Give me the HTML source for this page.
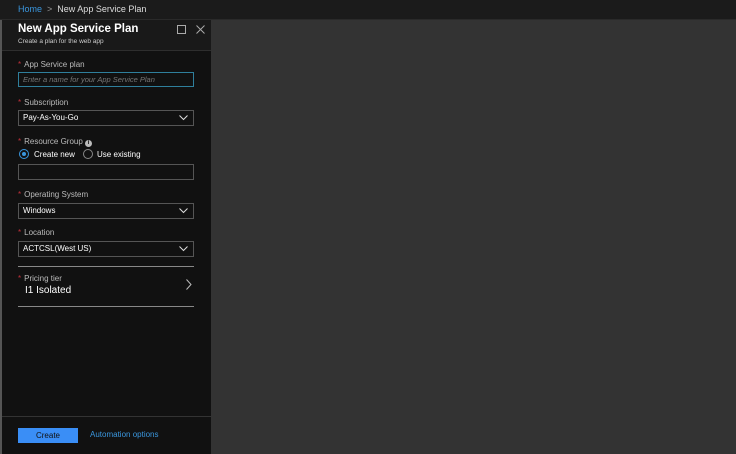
<!DOCTYPE html><html><head><style>
body{margin:0;width:736px;height:454px;background:#333;font-family:"Liberation Sans",sans-serif;position:relative;overflow:hidden}
.top{position:absolute;left:0;top:0;width:736px;height:19px;background:#1b1b1b;border-bottom:1px solid #2a2a2a;font-size:9px;color:#ddd;line-height:19px}
.top span.h{color:#3a96dd;margin-left:18px}
.strip{position:absolute;left:0;top:20px;width:2px;height:434px;background:#555}
.panel{position:absolute;left:2px;top:20px;width:209px;height:434px;background:#111}
.hdr{position:absolute;left:0;top:0;width:209px;height:30px;background:#191919;border-bottom:1px solid #2e2e2e}
.t{position:absolute;left:16px;top:3px;font-size:11.5px;font-weight:bold;color:#fff}
.st{position:absolute;left:16px;top:18px;font-size:6.5px;color:#ccc}
.lbl{position:absolute;left:16px;font-size:8px;color:#bbb}
.lbl b{color:#c0303a;font-weight:normal;margin-right:3px}
.box{position:absolute;left:16px;width:170px;height:14px;border:1px solid #555;font-size:8px;color:#fff;line-height:14px;padding-left:4px}
.chev{position:absolute;right:5px;top:4px}
.line{position:absolute;left:16px;width:176px;height:1px;background:#888}
</style></head><body>
<div class="top"><span class="h">Home</span> <span style="color:#999">&nbsp;&gt;&nbsp;</span> New App Service Plan</div>
<div class="strip"></div>
<div class="panel">
<div class="hdr"><div class="t">New App Service Plan</div><div class="st">Create a plan for the web app</div>
<div style="position:absolute;left:175px;top:5px;width:7px;height:7px;border:1px solid #aaa"></div>
<svg style="position:absolute;left:194px;top:5px" width="9" height="9"><path d="M0.5 0.5L8.5 8.5M8.5 0.5L0.5 8.5" stroke="#aaa" stroke-width="1"/></svg></div>
<div class="lbl" style="top:40px"><b>*</b>App Service plan</div>
<div class="box" style="top:52px;border-color:#2f7f9c;color:#777;font-style:italic;font-size:7.5px;height:13px">Enter a name for your App Service Plan</div>
<div class="lbl" style="top:78px"><b>*</b>Subscription</div>
<div class="box" style="top:90px">Pay-As-You-Go<svg class="chev" width="9" height="6"><path d="M0.5 0.5L4.5 4.5L8.5 0.5" stroke="#ddd" fill="none"/></svg></div>
<div class="lbl" style="top:117px"><b>*</b>Resource Group <span style="display:inline-block;width:7px;height:7px;border-radius:50%;background:#bbb;color:#111;font-size:6px;text-align:center;line-height:7px;font-weight:bold">i</span></div>
<div style="position:absolute;left:17px;top:129px;width:10px;height:10px;border-radius:50%;border:1px solid #3a96dd;box-sizing:border-box"><div style="margin:2px;width:4px;height:4px;border-radius:50%;background:#3a96dd"></div></div>
<div style="position:absolute;left:32px;top:130px;font-size:8px;color:#fff">Create new</div>
<div style="position:absolute;left:81px;top:129px;width:10px;height:10px;border-radius:50%;border:1px solid #888;box-sizing:border-box"></div>
<div style="position:absolute;left:95px;top:130px;font-size:8px;color:#fff">Use existing</div>
<div class="box" style="top:144px"></div>
<div class="lbl" style="top:170px"><b>*</b>Operating System</div>
<div class="box" style="top:183px">Windows<svg class="chev" width="9" height="6"><path d="M0.5 0.5L4.5 4.5L8.5 0.5" stroke="#ddd" fill="none"/></svg></div>
<div class="lbl" style="top:208px"><b>*</b>Location</div>
<div class="box" style="top:221px">ACTCSL(West US)<svg class="chev" width="9" height="6"><path d="M0.5 0.5L4.5 4.5L8.5 0.5" stroke="#ddd" fill="none"/></svg></div>
<div class="line" style="top:246px"></div>
<div class="lbl" style="top:254px"><b>*</b>Pricing tier</div>
<div style="position:absolute;left:23px;top:265px;font-size:10px;color:#fff">I1 Isolated</div>
<svg style="position:absolute;left:184px;top:259px" width="6" height="11"><path d="M0.5 0.5L5 5.5L0.5 10.5" stroke="#bbb" fill="none"/></svg>
<div class="line" style="top:286px"></div>
<div style="position:absolute;left:0;top:396px;width:209px;height:1px;background:#333"></div>
<div style="position:absolute;left:16px;top:408px;width:60px;height:15px;background:#3a8ef6;color:#111;font-size:8px;text-align:center;line-height:15px">Create</div>
<div style="position:absolute;left:88px;top:410px;font-size:8px;color:#3a96dd">Automation options</div>
</div>
</body></html>
